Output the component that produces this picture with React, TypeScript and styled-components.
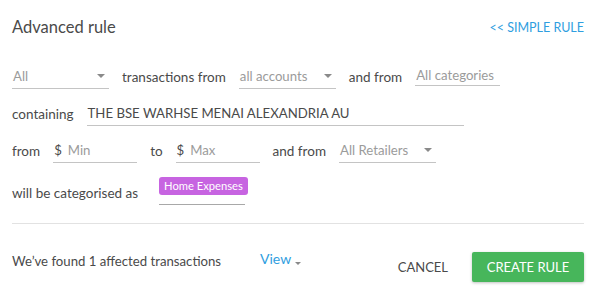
import React from 'react';
import styled, { createGlobalStyle } from 'styled-components';

const GlobalStyle = createGlobalStyle`
  body {
    margin: 0;
    background: #fff;
    font-family: Lato, "Open Sans", sans-serif;
    color: #4a4a4a;
  }
`

const Panel = styled.div`
  width: 600px;
  height: 294px;
  box-sizing: border-box;
  padding: 0 16px 0 12px;
`

const Header = styled.div`
  height: 54px;
  display: flex;
  align-items: center;
  justify-content: space-between;
`

const Title = styled.h1`
  margin: 0;
  font-size: 16.5px;
  font-weight: 400;
  color: #4a4a4a;
`

const LinkButton = styled.a`
  font-size: 12.5px;
  color: #2f9ee0;
  cursor: pointer;
`

const Rows = styled.div`
  display: flex;
  flex-direction: column;
  gap: 12px;
  padding-top: 10px;
`

const Row = styled.div<{ $tall?: boolean }>`
  display: flex;
  align-items: ${p => (p.$tall ? 'flex-end' : 'center')};
  gap: 13px;
  height: ${p => (p.$tall ? '30px' : '25px')};
`

const Label = styled.span`
  font-size: 13.5px;
  line-height: 24px;
  color: #4a4a4a;
  white-space: nowrap;
`

const Field = styled.div<{ $w: number; $muted?: boolean; $short?: boolean }>`
  box-sizing: border-box;
  width: ${p => p.$w}px;
  height: ${p => (p.$short ? '22px' : '25px')};
  align-self: ${p => (p.$short ? 'flex-start' : 'auto')};
  display: flex;
  align-items: center;
  justify-content: space-between;
  border-bottom: 1px solid #c4c4c4;
  font-size: 13.2px;
  color: ${p => (p.$muted ? '#9b9b9b' : '#4a4a4a')};
  white-space: nowrap;
  padding: 0 4px 0 1px;
`

const Caret = styled.span`
  width: 0;
  height: 0;
  border-left: 4px solid transparent;
  border-right: 4px solid transparent;
  border-top: 4px solid #8a8a8a;
`

const Dollar = styled.span`
  color: #4a4a4a;
  margin-right: 6px;
`

const Amount = styled.span`
  display: flex;
  align-items: center;
`

const BadgeField = styled.div`
  box-sizing: border-box;
  width: 86px;
  height: 30px;
  margin-left: 8px;
  padding-top: 2px;
  display: flex;
  align-items: flex-start;
  border-bottom: 1px solid #a8a8a8;
`

const Badge = styled.span`
  display: block;
  height: 18px;
  line-height: 18px;
  padding: 0 5px;
  border-radius: 3px;
  background: #c764e1;
  color: #fff;
  font-size: 11.2px;
  white-space: nowrap;
`

const Divider = styled.hr`
  margin: 18px 0 0;
  border: 0;
  border-top: 1px solid #e2e2e2;
`

const Footer = styled.div`
  display: flex;
  align-items: center;
  padding-top: 28px;
`

const Info = styled.div`
  display: flex;
  align-items: flex-start;
  align-self: flex-start;
  flex: 1;
`

const InfoText = styled.span`
  font-size: 13.2px;
  line-height: 18px;
  color: #4a4a4a;
  width: 248px;
`

const ViewLink = styled.a`
  display: flex;
  align-items: flex-end;
  font-size: 14px;
  line-height: 14px;
  color: #2f9ee0;
  gap: 4px;
`

const SmallCaret = styled(Caret)`
  border-left-width: 3px;
  border-right-width: 3px;
  border-top-width: 3px;
  margin-bottom: 1px;
`

const CancelButton = styled.button`
  background: none;
  border: 0;
  font-family: inherit;
  font-size: 13px;
  color: #4a4a4a;
  margin-right: 24px;
  padding: 0;
`

const PrimaryButton = styled.button`
  height: 30px;
  width: 112px;
  border: 0;
  border-radius: 2px;
  background: #47b65b;
  color: #fff;
  font-family: inherit;
  font-size: 13px;
  box-shadow: 0 1px 3px rgba(0, 0, 0, 0.25);
`

const App = () => {
  return (
    <Panel>
      <GlobalStyle />
      <Header>
        <Title>Advanced rule</Title>
        <LinkButton>&lt;&lt; SIMPLE RULE</LinkButton>
      </Header>
      <Rows>
        <Row>
          <Field $w={97} $muted>All<Caret /></Field>
          <Label>transactions from</Label>
          <Field $w={97} $muted>all accounts<Caret /></Field>
          <Label>and from</Label>
          <Field $w={85} $muted $short>All categories</Field>
        </Row>
        <Row>
          <Label>containing</Label>
          <Field $w={377}>THE BSE WARHSE MENAI ALEXANDRIA AU</Field>
        </Row>
        <Row>
          <Label>from</Label>
          <Field $w={84} $muted><Amount><Dollar>$</Dollar>Min</Amount></Field>
          <Label>to</Label>
          <Field $w={84} $muted><Amount><Dollar>$</Dollar>Max</Amount></Field>
          <Label>and from</Label>
          <Field $w={97} $muted>All Retailers<Caret /></Field>
        </Row>
        <Row $tall>
          <Label>will be categorised as</Label>
          <BadgeField><Badge>Home Expenses</Badge></BadgeField>
        </Row>
      </Rows>
      <Divider />
      <Footer>
        <Info>
          <InfoText>We’ve found 1 affected transactions</InfoText>
          <ViewLink>View<SmallCaret /></ViewLink>
        </Info>
        <CancelButton>CANCEL</CancelButton>
        <PrimaryButton>CREATE RULE</PrimaryButton>
      </Footer>
    </Panel>
  );
}

export default App;
